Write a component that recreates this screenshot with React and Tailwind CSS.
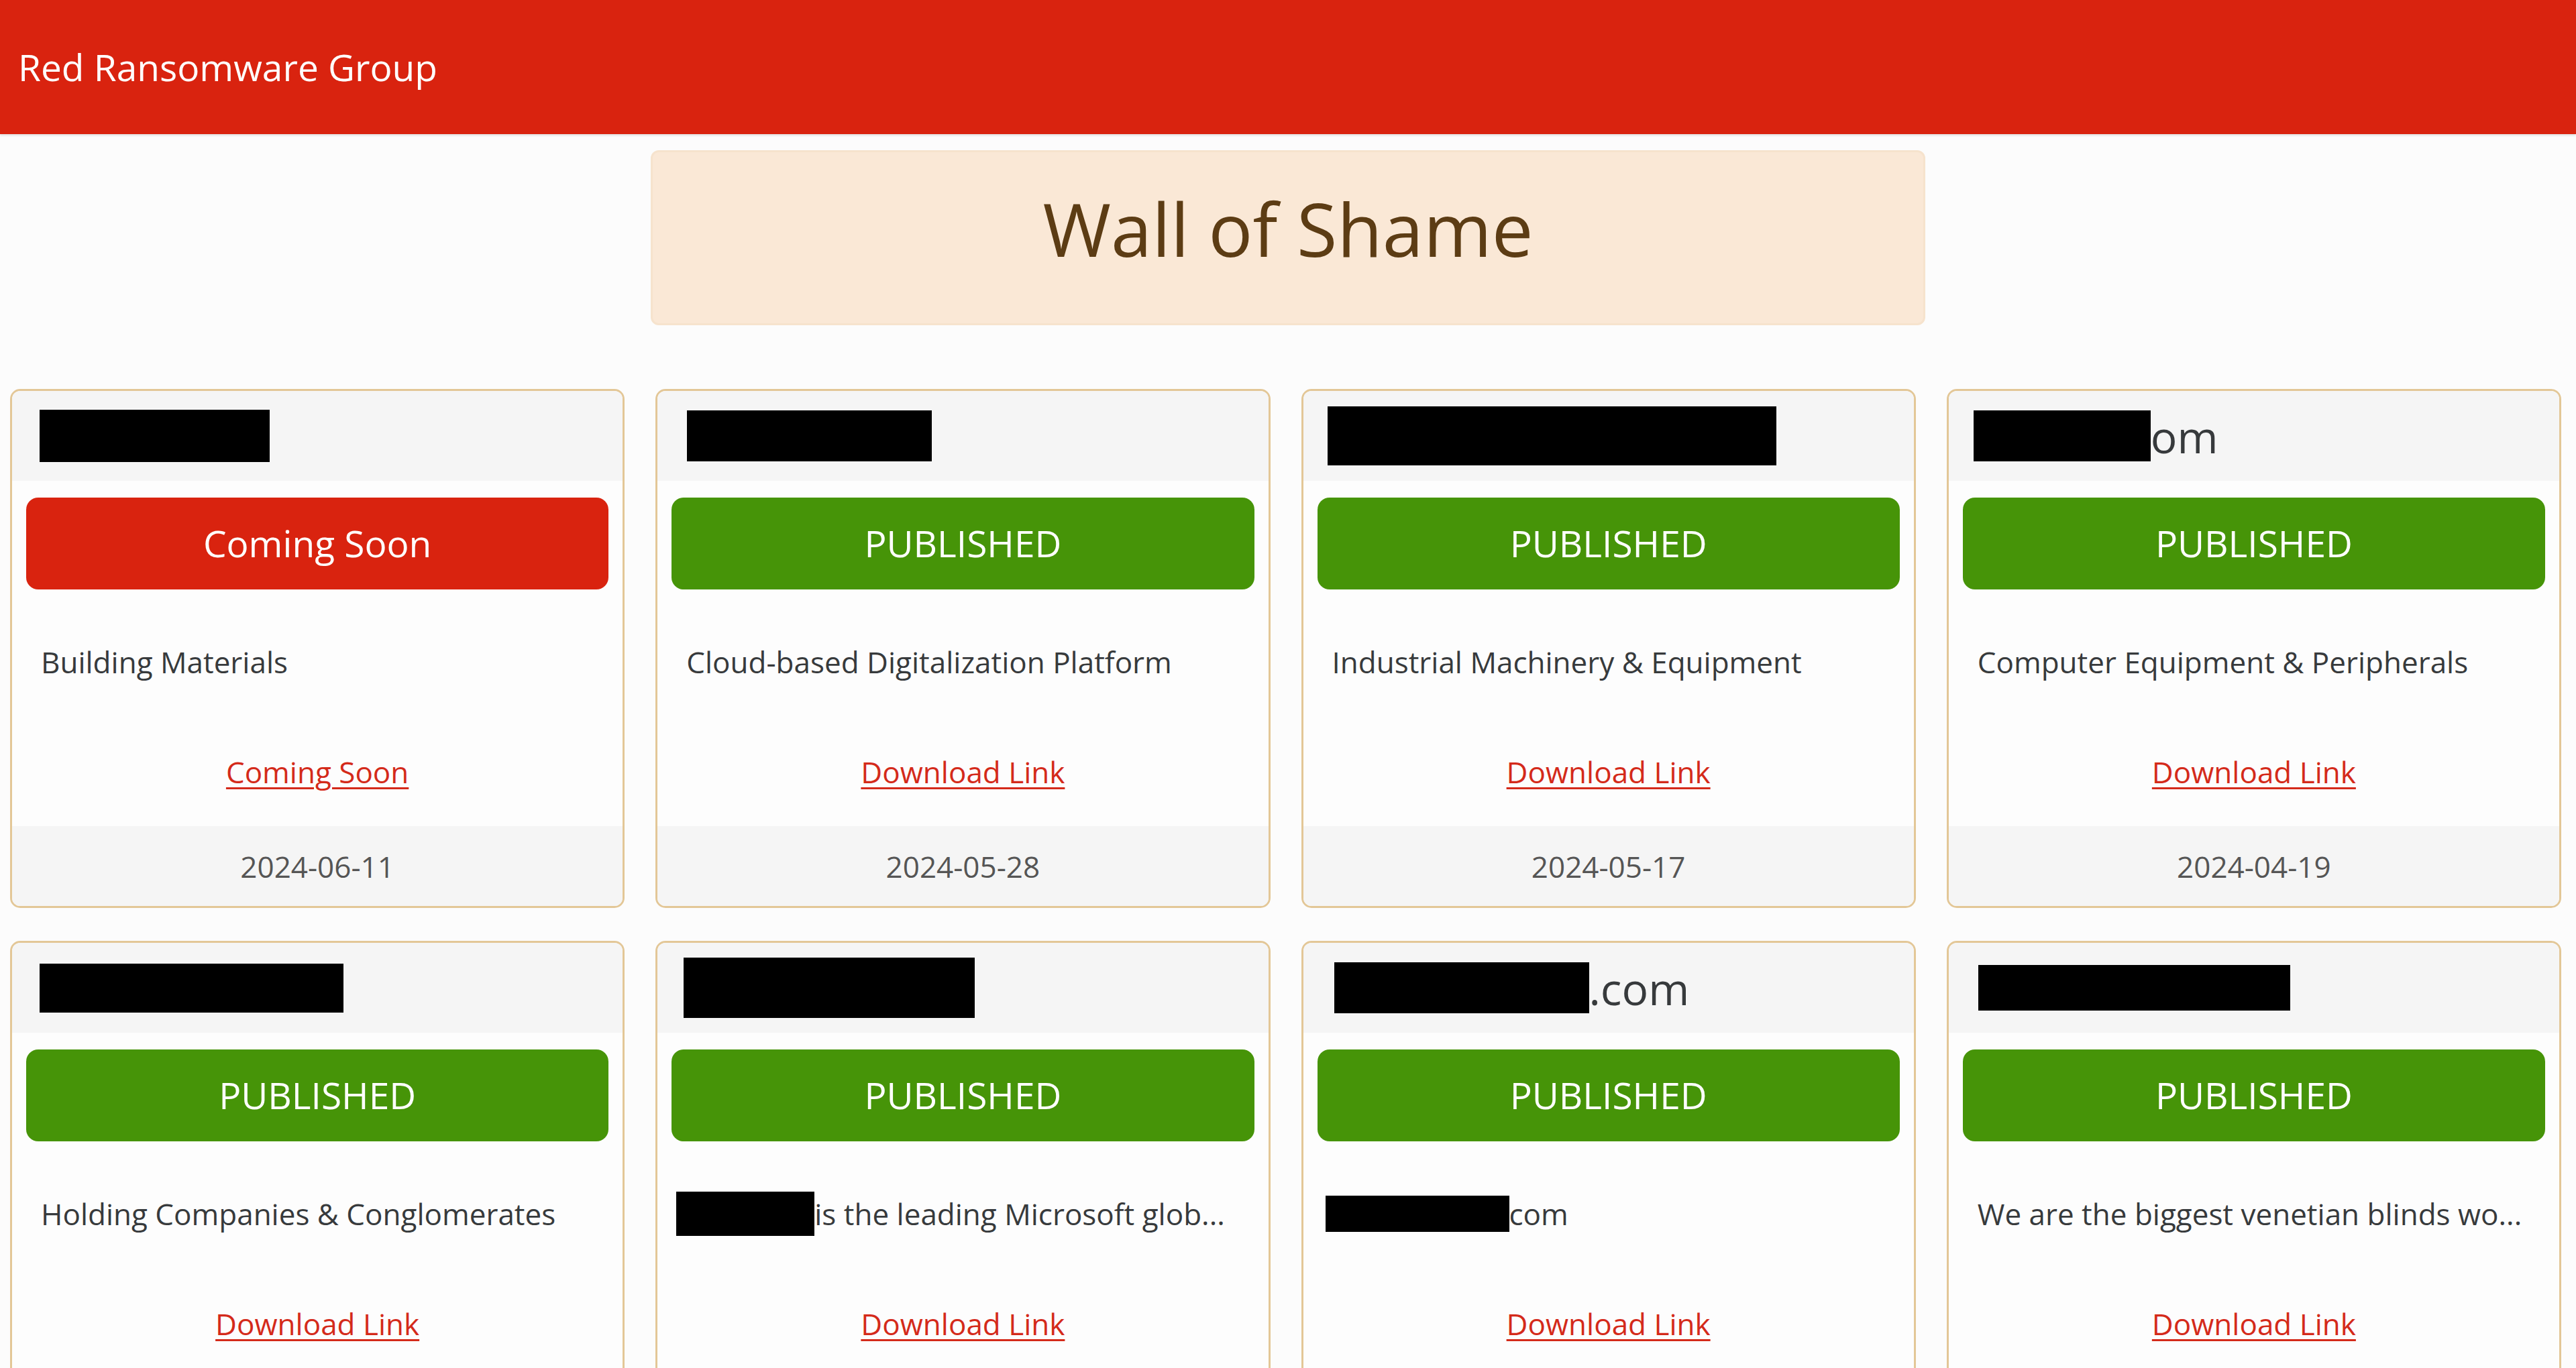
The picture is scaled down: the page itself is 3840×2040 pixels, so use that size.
import React from "react";

// victims listed on the wall, newest first
const posts = [
  {
    name: { bar: "ml-[3px] w-[343px] h-[78px]" },
    status: "soon",
    desc: "Building Materials",
    date: "2024-06-11",
  },
  {
    name: { bar: "ml-[6px] w-[365px] h-[76px]" },
    status: "published",
    desc: "Cloud-based Digitalization Platform",
    date: "2024-05-28",
  },
  {
    name: { bar: "ml-[-2px] w-[669px] h-[88px]" },
    status: "published",
    desc: "Industrial Machinery & Equipment",
    date: "2024-05-17",
  },
  {
    name: { bar: "ml-[-1px] w-[264px] h-[76px]", tail: "om" },
    status: "published",
    desc: "Computer Equipment & Peripherals",
    date: "2024-04-19",
  },
  {
    name: { bar: "ml-[3px] w-[453px] h-[73px]" },
    status: "published",
    desc: "Holding Companies & Conglomerates",
    date: "2024-04-02",
  },
  {
    name: { bar: "ml-[1px] w-[434px] h-[90px]" },
    status: "published",
    desc: { bar: "ml-[-15px] w-[206px] h-[66px]", text: "is the leading Microsoft glob..." },
    date: "2024-03-27",
  },
  {
    name: { bar: "ml-[8px] w-[380px] h-[76px]", tail: ".com" },
    status: "published",
    desc: { bar: "ml-[-10px] w-[274px] h-[54px]", text: "com" },
    date: "2024-03-15",
  },
  {
    name: { bar: "ml-[6px] w-[465px] h-[68px]" },
    status: "published",
    desc: "We are the biggest venetian blinds wo...",
    date: "2024-03-08",
  },
];

const Redacted = ({ className }) => (
  <span className={`inline-block bg-black align-middle ${className}`} />
);

const StatusBadge = ({ status }) =>
  status === "soon" ? (
    <div className="h-[137px] rounded-[18px] bg-[#d9230f] flex items-center justify-center text-[55px] text-white">
      Coming Soon
    </div>
  ) : (
    <div className="h-[137px] rounded-[18px] bg-[#469408] flex items-center justify-center text-[55px] text-white">
      PUBLISHED
    </div>
  );

const PostCard = ({ post }) => {
  const soon = post.status === "soon";
  return (
    <div className="h-[774px] rounded-[15px] border-[3px] border-[#e3c797] bg-[#fdfdfd] overflow-hidden flex flex-col">
      {/* Name */}
      <div className="h-[134px] shrink-0 bg-[#f5f5f5] flex items-center pl-[38px] text-[66px] text-[#373a3c] leading-none">
        <Redacted className={post.name.bar} />
        {post.name.tail && <span>{post.name.tail}</span>}
      </div>

      <div className="px-[21px] pt-[25px]">
        <StatusBadge status={post.status} />
      </div>

      {/* Description */}
      <div className="mt-[75px] px-[43px] h-[66px] flex items-center text-[44px] leading-[66px] text-[#373a3c] whitespace-nowrap overflow-hidden">
        {typeof post.desc === "string" ? (
          post.desc
        ) : (
          <>
            <Redacted className={post.desc.bar} />
            <span>{post.desc.text}</span>
          </>
        )}
      </div>

      <div className="mt-[98px] text-center">
        <a href="#" className="text-[44px] leading-[66px] text-[#d42a1a] underline underline-offset-[6px] decoration-[3px]">
          {soon ? "Coming Soon" : "Download Link"}
        </a>
      </div>

      {/* Date */}
      <div className="mt-auto h-[119px] shrink-0 bg-[#f5f5f5] flex items-center justify-center text-[44px] text-[#555]">
        {post.date}
      </div>
    </div>
  );
};

export default function App() {
  return (
    <div className="min-h-screen bg-[#fcfcfc] font-['Open_Sans',sans-serif] pb-[60px]">
      <nav className="h-[200px] bg-[#d9230f] flex items-center px-[27px] shadow-[0_2px_3px_rgba(0,0,0,0.12)]">
        <span className="text-[55px] text-white">Red Ransomware Group</span>
      </nav>

      <div className="pt-[24px]">
        <div className="mx-auto w-[1900px] h-[261px] rounded-[12px] border-[3px] border-[#f6e3cd] bg-[#fae8d6] flex items-center justify-center">
          <h1 className="text-[110px] text-[#5c3c14] -mt-[28px]">Wall of Shame</h1>
        </div>
      </div>

      <div className="mt-[95px] pl-[15px] pr-[22px] grid grid-cols-4 gap-x-[46px] gap-y-[49px]">
        {posts.map((post, i) => (
          <PostCard key={i} post={post} />
        ))}
      </div>
    </div>
  );
}
